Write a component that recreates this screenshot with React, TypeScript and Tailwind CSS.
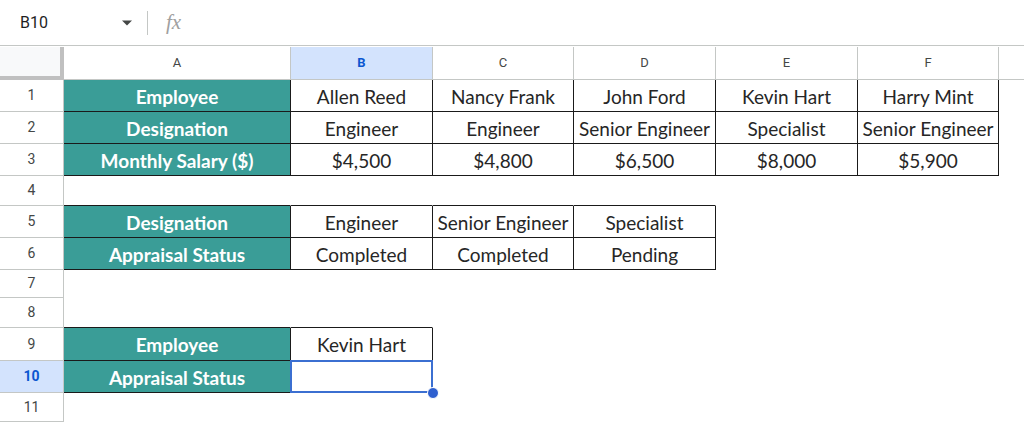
import React from 'react'

const COLS = ['A', 'B', 'C', 'D', 'E', 'F', '']
const COL_W = ['w-[227px]', 'w-[142px]', 'w-[141px]', 'w-[142px]', 'w-[142px]', 'w-[141px]', 'flex-1']
const ROW_H = ['h-[32px]', 'h-[32px]', 'h-[32px]', 'h-[30px]', 'h-[32px]', 'h-[32px]', 'h-[28px]', 'h-[30px]', 'h-[33px]', 'h-[32px]', 'h-[29px]']

// row index -> cells (index 0 = column A)
const DATA: Record<number, string[]> = {
  0: ['Employee', 'Allen Reed', 'Nancy Frank', 'John Ford', 'Kevin Hart', 'Harry Mint'],
  1: ['Designation', 'Engineer', 'Engineer', 'Senior Engineer', 'Specialist', 'Senior Engineer'],
  2: ['Monthly Salary ($)', '$4,500', '$4,800', '$6,500', '$8,000', '$5,900'],
  4: ['Designation', 'Engineer', 'Senior Engineer', 'Specialist'],
  5: ['Appraisal Status', 'Completed', 'Completed', 'Pending'],
  8: ['Employee', 'Kevin Hart'],
  9: ['Appraisal Status', ''],
}

const isData = (r: number, c: number) => {
  const row = DATA[r]
  return !!row && c < row.length
}

const SEL_ROW = 9
const SEL_COL = 1

export default function App() {
  return (
    <div className="w-[1024px] h-[423px] overflow-hidden bg-white" style={{ fontFamily: 'Roboto, Arial, sans-serif' }}>
      {/* Formula bar */}
      <div className="flex items-center h-[46px] border-b border-[#c4c7c5] bg-white">
        <div className="w-[110px] pl-[20px] text-[16px] text-[#1f1f1f]">B10</div>
        <svg width="12" height="8" viewBox="0 0 12 8" className="ml-[11px]">
          <path d="M1 1.5h10L6 6.5z" fill="#444746" />
        </svg>
        <div className="ml-[14px] w-px h-[24px] bg-[#c4c7c5]" />
        <span
          className="ml-[18px] text-[21px] italic text-[#a0a0a0]"
          style={{ fontFamily: '"Liberation Serif", serif' }}
        >
          fx
        </span>
      </div>

      {/* Column headers */}
      <div className="flex h-[34px] bg-white">
        <div className="w-[64px] shrink-0 bg-[#f8f9fa] border-r-4 border-b-4 border-[#c0c0c0] mt-px" />
        {COLS.map((c, i) => (
          <div
            key={i}
            className={`${COL_W[i]} shrink-0 flex items-center justify-center text-[13px] border-b border-[#c4c7c5] mt-px ${
              i === COLS.length - 1 ? '' : 'border-r'
            } ${
              i === SEL_COL
                ? 'bg-[#d3e3fd] text-[#0b57d0] font-bold'
                : 'bg-white text-[#444746]'
            }`}
          >
            {c}
          </div>
        ))}
      </div>

      {/* Rows */}
      {ROW_H.map((h, r) => (
        <div key={r} className={`flex ${h} ${r === SEL_ROW ? 'relative z-10' : ''}`}>
          <div
            className={`w-[64px] shrink-0 flex items-center justify-center text-[14px] border-r border-b border-[#c4c7c5] ${
              r === SEL_ROW ? 'bg-[#d3e3fd] text-[#0b57d0] font-bold' : 'bg-white text-[#444746]'
            }`}
          >
            {r + 1}
          </div>
          {COLS.map((_, c) => {
            const data = isData(r, c)
            const blackRight = data || isData(r, c + 1)
            const blackBottom = data || isData(r + 1, c)
            const label = c === 0 && data
            const selected = r === SEL_ROW && c === SEL_COL
            const text = data ? DATA[r][c] : ''
            return (
              <div
                key={c}
                className={`${COL_W[c]} shrink-0 relative flex items-center justify-center pt-px border-b border-r ${
                  blackBottom ? 'border-b-[#1a1a1a]' : 'border-b-white'
                } ${blackRight ? 'border-r-[#1a1a1a]' : 'border-r-white'} ${
                  label ? 'bg-[#3a9d97] text-white font-bold' : 'bg-white text-[#262626]'
                } ${selected ? 'z-10' : ''}`}
                style={{ fontFamily: 'Lato, "Open Sans", sans-serif' }}
              >
                <span className="text-[19px] leading-none whitespace-nowrap">{text}</span>
                {selected && (
                  <>
                    <div className="absolute inset-[-1px] border-2 border-[#3b6fd1] pointer-events-none" />
                    <div className="absolute right-[-7px] bottom-[-7px] w-[12px] h-[12px] rounded-full bg-[#2e5fcf] border border-white" />
                  </>
                )}
              </div>
            )
          })}
        </div>
      ))}
    </div>
  )
}
